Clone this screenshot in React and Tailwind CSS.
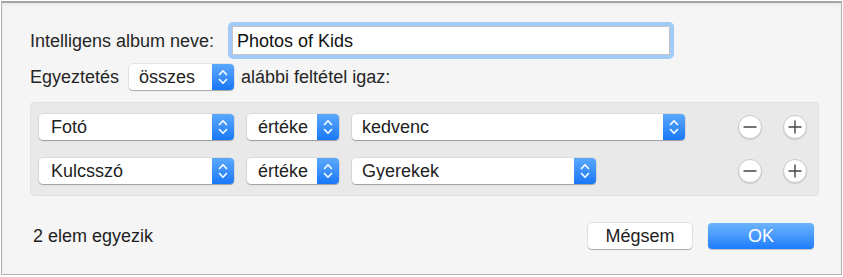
import React from 'react';

const font = { fontFamily: '"Liberation Sans", Arial, sans-serif' };

function Stepper() {
  return (
    <div className="flex h-full w-[22px] shrink-0 items-center justify-center rounded-r-[4px] bg-gradient-to-b from-[#5ba8fc] to-[#1677f5]">
      <svg width="10" height="18" viewBox="0 0 10 18" fill="none" stroke="white" strokeWidth="1.6" strokeLinecap="round" strokeLinejoin="round">
        <path d="M1.5 6.5 L5 2.8 L8.5 6.5" />
        <path d="M1.5 11.5 L5 15.2 L8.5 11.5" />
      </svg>
    </div>
  );
}

function Popup({ label, width, textPad = 'pl-[12px]' }) {
  return (
    <div
      className="flex h-[26px] shrink-0 items-center rounded-[4px] bg-white shadow-[0_0_0_0.5px_rgba(0,0,0,0.12),0_1px_1px_rgba(0,0,0,0.28)]"
      style={{ width }}
    >
      <span className={`flex-1 truncate text-[18px] leading-none text-[#222] ${textPad}`}>{label}</span>
      <Stepper />
    </div>
  );
}

function RoundButton({ plus }) {
  return (
    <button className="flex h-[24px] w-[24px] items-center justify-center rounded-full border border-[#c9c9c9] bg-white shadow-[0_1px_1px_rgba(0,0,0,0.12)]">
      <svg width="16" height="16" viewBox="0 0 16 16" stroke="#444" strokeWidth="1.4" strokeLinecap="round">
        <path d="M2 8 H14" />
        {plus && <path d="M8 2 V14" />}
      </svg>
    </button>
  );
}

function CriteriaRow({ field, value, valueWidth }) {
  return (
    <div className="flex h-[26px] items-center">
      <Popup label={field} width={195} />
      <div className="ml-[13px]">
        <Popup label="értéke" width={92} textPad="pl-[11px]" />
      </div>
      <div className="ml-[13px]">
        <Popup label={value} width={valueWidth} textPad="pl-[10px]" />
      </div>
      <div className="ml-auto mr-[11px] flex gap-[21px]">
        <RoundButton />
        <RoundButton plus />
      </div>
    </div>
  );
}

export default function App() {
  return (
    <div className="h-[277px] w-[843px] bg-white" style={font}>
      <div className="ml-[1px] mt-[1px] h-[274px] w-[841px] border border-t-2 border-[#b3b3b3] border-t-[#a5a5a5] bg-[#f5f5f5] shadow-[inset_0_2px_3px_rgba(0,0,0,0.06)]">
        <div className="pl-[28px] pt-[19px] text-[#262626]">
          {/* name row */}
          <div className="flex h-[37px] items-center">
            <span className="w-[198px] text-[18px] leading-none">Intelligens album neve:</span>
            <div className="h-[37px] w-[446px] rounded-[5px] bg-[#a2cbf7] p-[4px]">
              <div className="flex h-full items-center border border-[#c4c4c4] bg-white pl-[4px] text-[18px] leading-none text-[#111]">
                Photos of Kids
              </div>
            </div>
          </div>

          {/* match row */}
          <div className="mt-[4px] flex h-[27px] items-center">
            <span className="text-[18px] leading-none">Egyeztetés</span>
            <div className="ml-[10px]">
              <Popup label="összes" width={105} textPad="pl-[10px]" />
            </div>
            <span className="ml-[7px] text-[18px] leading-none">alábbi feltétel igaz:</span>
          </div>

          {/* criteria */}
          <div className="mt-[12px] flex h-[94px] w-[789px] flex-col gap-[18px] rounded-[4px] border border-[#e0e0e0] bg-[#e9e9e9] pl-[8px] pt-[11px]">
            <CriteriaRow field="Fotó" value="kedvenc" valueWidth={333} />
            <CriteriaRow field="Kulcsszó" value="Gyerekek" valueWidth={244} />
          </div>

          {/* footer */}
          <div className="mt-[27px] flex h-[26px] items-center">
            <span className="ml-[3px] text-[18px] leading-none text-[#1e1e1e]">2 elem egyezik</span>
            <button className="ml-auto h-[26px] w-[104px] rounded-[4px] bg-white text-[18px] leading-none text-[#222] shadow-[0_0_0_0.5px_rgba(0,0,0,0.15),0_1px_1px_rgba(0,0,0,0.25)]">
              Mégsem
            </button>
            <button className="ml-[16px] mr-[27px] h-[26px] w-[106px] rounded-[4px] bg-gradient-to-b from-[#6cb4fb] to-[#1a7cfd] text-[18px] leading-none text-white shadow-[0_1px_1px_rgba(0,0,0,0.2)]">
              OK
            </button>
          </div>
        </div>
      </div>
    </div>
  );
}
